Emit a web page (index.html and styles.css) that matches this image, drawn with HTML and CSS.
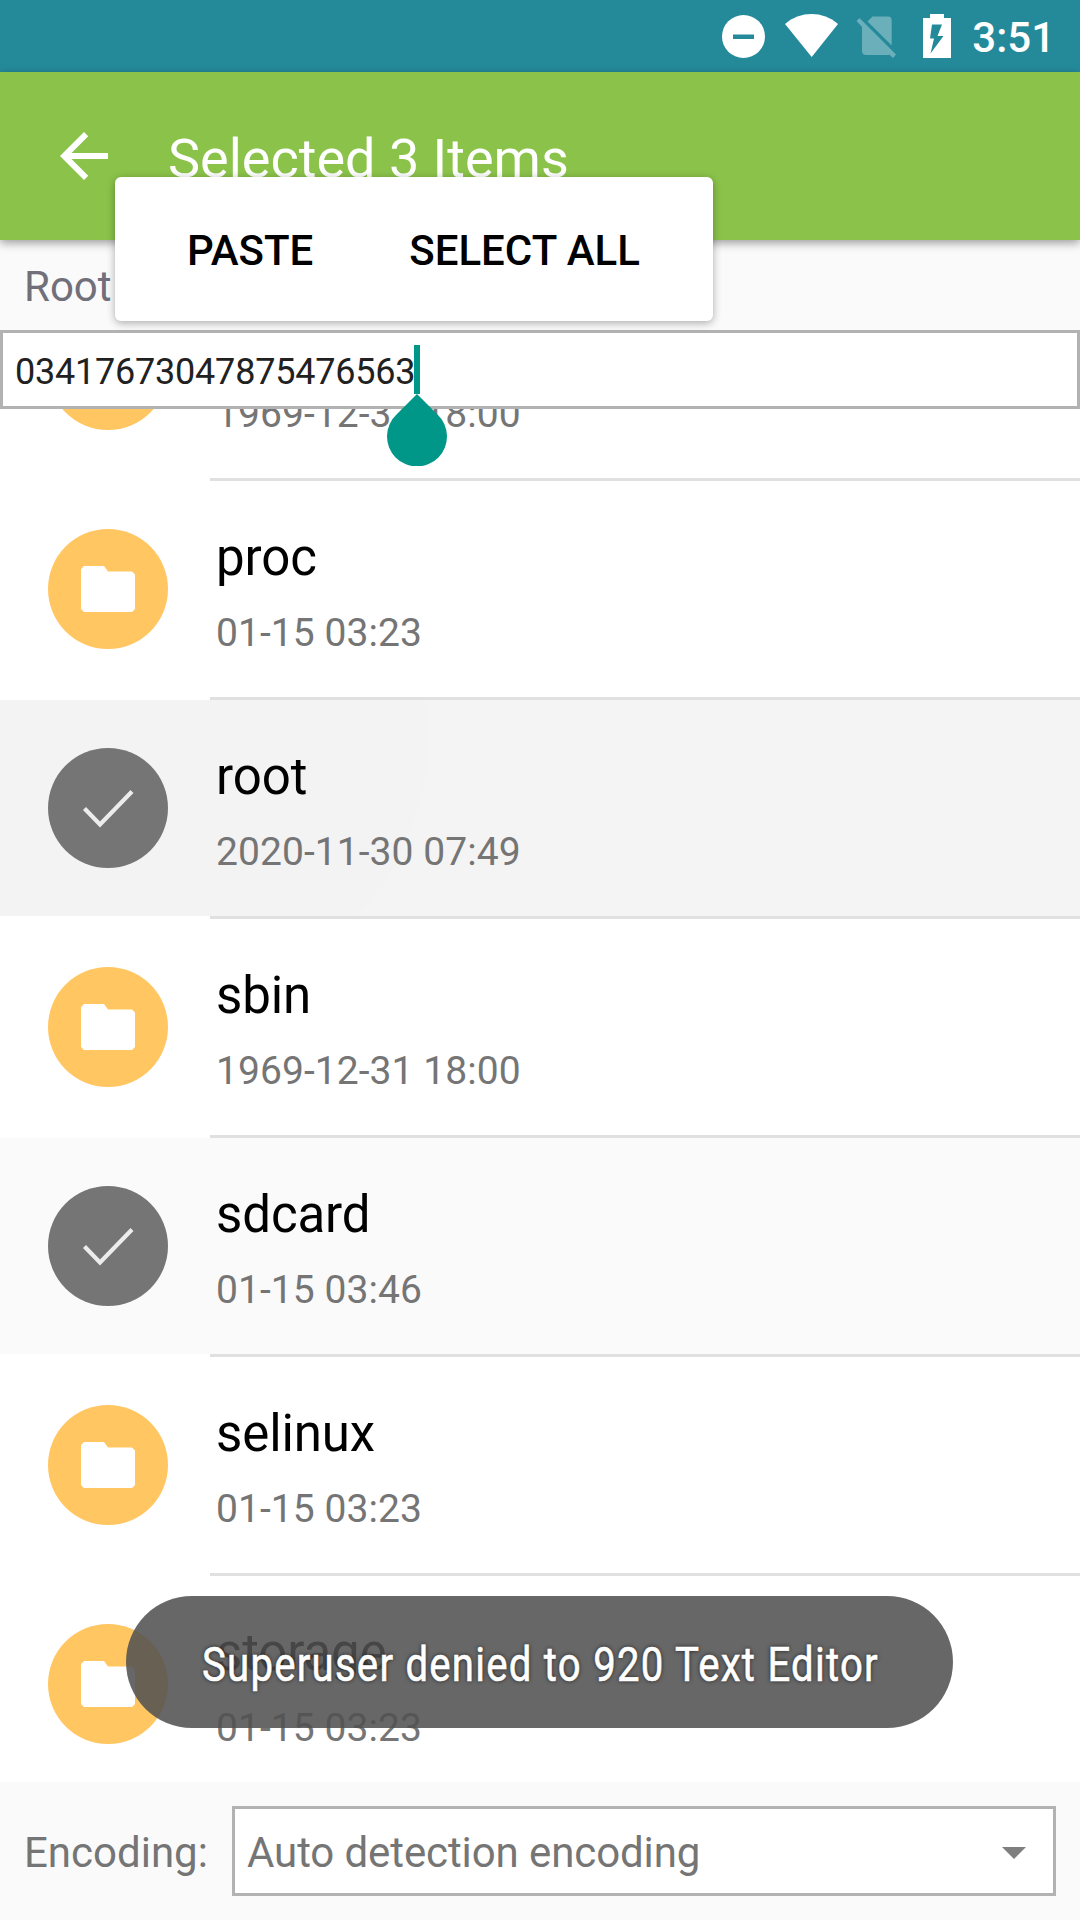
FILE: index.html
```html
<!DOCTYPE html>
<html lang="en">
<head>
<meta charset="utf-8">
<title>Selected 3 Items</title>
<link rel="stylesheet" href="styles.css">
</head>
<body>
<svg class="defs" width="0" height="0">
  <symbol id="folder" viewBox="0 0 120 120"><path fill="#fff" d="M36 37H56L60 42.500H84L87 45.500V80L84 83H36L33 80V40Z"/></symbol>
  <symbol id="check" viewBox="0 0 120 120"><path fill="none" stroke="#ececec" stroke-width="4.200" d="M36.500 60.500 52 76.500 84 43.500"/></symbol>
</svg>
<div class="screen">
  <header class="status">
    <svg class="status-icons" width="240" height="72" viewBox="715 0 240 72">
      <circle cx="743.500" cy="36.500" r="21.500" fill="#fff"/>
      <rect x="733" y="34.500" width="21" height="4.500" fill="#248a9a"/>
      <path fill="#fff" d="M785 24C800 10.700 823 10.700 838 24L811.700 57Z"/>
      <g fill="#fff" fill-opacity=".32">
        <path d="M867.500 21.500 872.500 16.500H888Q891.700 16.500 891.700 20.500V45.500Z"/>
        <path d="M856.500 21 859.500 18 896 54.500 893 58 889.300 54.500Q888.500 55 887 55H866Q862 55 862 51V27Z"/>
      </g>
      <path fill="#fff" fill-rule="evenodd" d="M930 14H944V18H951V58H923V18H930ZM932 24.500 930 38.500H934L930.500 53.500 943.500 36H937.500L942 24.500Z"/>
    </svg>
    <span class="clock">3:51</span>
  </header>
  <nav class="toolbar">
    <svg class="back" viewBox="0 0 24 24"><path fill="#fff" d="M20 11H7.830l5.590-5.590L12 4l-8 8 8 8 1.410-1.410L7.830 13H20z"/></svg>
    <h1 class="title">Selected 3 Items</h1>
  </nav>
  <div class="path">Root</div>
  <div class="field"><span class="value">03417673047875476563</span><span class="caret"></span>
    <svg class="handle" width="60" height="72" viewBox="0 0 60 72"><path fill="#009788" d="M30 0 50.500 20.500A30 30 0 1 1 9.500 20.500Z"/></svg>
  </div>
  <main class="list">
    <div class="rows">
      <div class="row"><svg class="avatar"><use href="#folder"/></svg><div class="info"><div class="name"></div><div class="date">1969-12-31 18:00</div></div></div>
      <div class="row"><svg class="avatar"><use href="#folder"/></svg><div class="info"><div class="name">proc</div><div class="date">01-15 03:23</div></div></div>
      <div class="row pressed"><svg class="avatar checked"><use href="#check"/></svg><div class="info"><div class="name">root</div><div class="date">2020-11-30 07:49</div></div></div>
      <div class="row"><svg class="avatar"><use href="#folder"/></svg><div class="info"><div class="name">sbin</div><div class="date">1969-12-31 18:00</div></div></div>
      <div class="row selected"><svg class="avatar checked"><use href="#check"/></svg><div class="info"><div class="name">sdcard</div><div class="date">01-15 03:46</div></div></div>
      <div class="row"><svg class="avatar"><use href="#folder"/></svg><div class="info"><div class="name">selinux</div><div class="date">01-15 03:23</div></div></div>
      <div class="row"><svg class="avatar"><use href="#folder"/></svg><div class="info"><div class="name">storage</div><div class="date">01-15 03:23</div></div></div>
    </div>
  </main>
  <footer class="encoding">
    <span class="label">Encoding:</span>
    <div class="select"><span class="choice">Auto detection encoding</span><svg width="24" height="12" viewBox="0 0 24 12"><path fill="#7f7f7f" d="M0 0H24L12 12Z"/></svg></div>
  </footer>
  <div class="popup"><span>PASTE</span><span>SELECT ALL</span></div>
  <div class="toast"><span class="message">Superuser denied to 920 Text Editor</span></div>
</div>
</body>
</html>
```
FILE: styles.css
```css
* { box-sizing: border-box; }
body { margin: 0; font-family: Roboto, sans-serif; }
.defs { position: absolute; }
.screen {
  position: relative;
  display: flex;
  flex-direction: column;
  width: 1080px;
  height: 1920px;
  overflow: hidden;
  background: #fafafa;
}
.status {
  display: flex;
  flex: 0 0 72px;
  align-items: center;
  justify-content: flex-end;
  gap: 17px;
  padding-right: 25px;
  background: #248a9a;
  color: #fff;
}
.clock { padding-top: 3px; font-size: 42px; font-weight: 500; line-height: 60px; }
.toolbar {
  position: relative;
  display: flex;
  flex: 0 0 168px;
  align-items: center;
  padding-left: 48px;
  background: #8bc34a;
  box-shadow: 0 3px 9px rgba(0, 0, 0, .38);
}
.back { width: 72px; height: 72px; }
.title { margin: 4px 0 0 48px; font-size: 54px; font-weight: 400; color: #fff; }
.path {
  flex: 0 0 90px;
  padding: 3px 0 0 24px;
  font-size: 42px;
  line-height: 87px;
  color: #706f7a;
}
.field {
  position: relative;
  z-index: 1;
  display: flex;
  align-items: flex-start;
  flex: 0 0 79px;
  padding: 12px 12px 0;
  border: 3px solid #b2b2b2;
  background: #fff;
}
.value { font-size: 36px; line-height: 54px; letter-spacing: -.22px; color: #212121; }
.caret { position: absolute; left: 411px; top: 12px; width: 6px; height: 49px; background: #009788; }
.handle { position: absolute; left: 384px; top: 61px; }
.list { flex: 0 0 1373px; overflow: hidden; background: #fff; }
.rows { margin-top: -147px; }
.row {
  display: flex;
  height: 219px;
  padding: 48px 0 0 48px;
  background: linear-gradient(#e0e0e0, #e0e0e0) 210px 216px / 870px 3px no-repeat;
}
.pressed {
  background:
    linear-gradient(#e0e0e0, #e0e0e0) 210px 216px / 870px 3px no-repeat,
    linear-gradient(#fff, #fff) 0 216px / 210px 3px no-repeat,
    radial-gradient(circle at 165px 35px, #f3f3f3 263px, #f4f4f4 264px);
}
.selected {
  background:
    linear-gradient(#e0e0e0, #e0e0e0) 210px 216px / 870px 3px no-repeat,
    linear-gradient(#fafafa, #fafafa) 0 0 / 100% 216px no-repeat;
}
.avatar { flex: none; width: 120px; height: 120px; border-radius: 50%; background: #ffc662; }
.checked { background: #757575; }
.info { margin-left: 48px; }
.name { height: 60px; font-size: 51px; line-height: 58px; letter-spacing: -.1px; color: #000; }
.date { margin-top: 21px; font-size: 39px; line-height: 46px; letter-spacing: .06px; color: #757575; }
.encoding {
  display: flex;
  flex: 1;
  align-items: center;
  padding: 0 24px;
  font-size: 42px;
  color: #757575;
}
.label { flex: 0 0 208px; padding-top: 3px; }
.select {
  display: flex;
  flex: 1;
  align-items: center;
  justify-content: space-between;
  height: 90px;
  padding: 3px 27px 0 12px;
  border: 3px solid #b2b2b2;
  background: #fff;
}
.choice { letter-spacing: -.1px; }
.popup {
  position: absolute;
  z-index: 2;
  left: 115px;
  top: 177px;
  display: flex;
  align-items: center;
  gap: 96px;
  width: 598px;
  height: 144px;
  padding: 3px 0 0 72px;
  border-radius: 6px;
  background: #fff;
  box-shadow: 0 2px 8px rgba(0, 0, 0, .32);
  font-size: 42px;
  font-weight: 500;
  color: #000;
}
.toast {
  position: absolute;
  z-index: 2;
  left: 126px;
  top: 1596px;
  display: flex;
  align-items: center;
  width: 827px;
  height: 132px;
  padding: 4px 0 0 76px;
  border-radius: 66px;
  background: rgba(80, 80, 80, .87);
  color: #fff;
}
.message {
  font-size: 48px;
  white-space: nowrap;
  text-shadow: 0 0 5px rgba(0, 0, 0, .75);
  -webkit-text-stroke: .6px #fff;
  letter-spacing: 1.500px;
  transform: scaleX(.8355);
  transform-origin: left;
}
```
